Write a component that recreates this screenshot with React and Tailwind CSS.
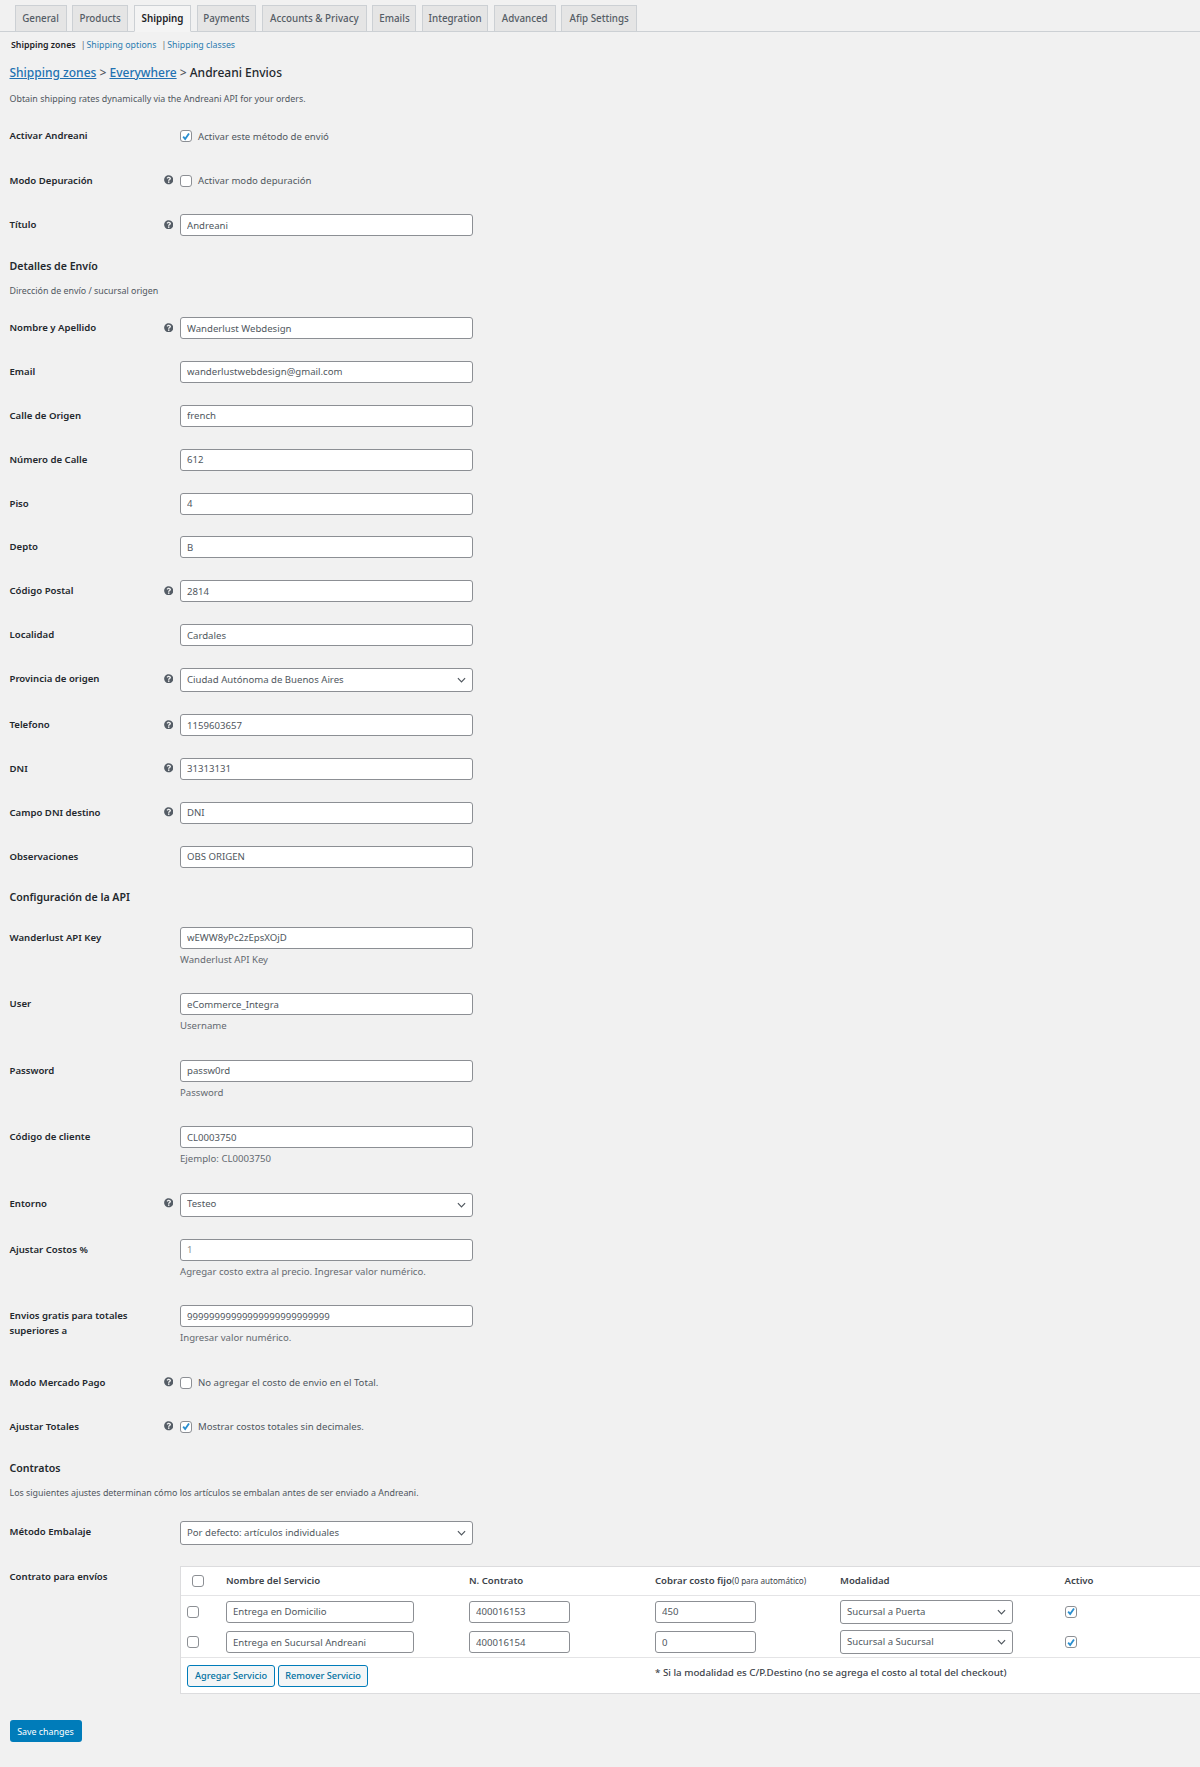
import React from "react";
import { FaQuestionCircle } from "react-icons/fa";

const tabs = ["General","Products","Shipping","Payments","Accounts & Privacy","Emails","Integration","Advanced","Afip Settings"];
const tabW = ["w-[52px]","w-[56.5px]","w-[57.5px]","w-[59.5px]","w-[105.5px]","w-[44px]","w-[66.5px]","w-[62px]","w-[76px]"];

const Help = () => <FaQuestionCircle className="absolute right-[7px] top-[5.5px] w-[9.5px] h-[9.5px] text-[#555d66]" />;

const Check = ({ on, className = "" }) => (
  <span className={"inline-flex shrink-0 items-center justify-center w-[12px] h-[12px] bg-white border border-[#8c8f94] rounded-[3px] " + className}>
    {on && (
      <svg viewBox="0 0 12 12" className="w-[11px] h-[11px]">
        <path d="M2.6 6.2 L5 9 L9.6 2.4" fill="none" stroke="#2a8fd0" strokeWidth="2.2" />
      </svg>
    )}
  </span>
);

const Chevron = () => (
  <svg viewBox="0 0 10 6" className="absolute right-[7px] top-1/2 -mt-[3px] w-[9px] h-[6px]">
    <path d="M1 1 L5 5 L9 1" fill="none" stroke="#50575e" strokeWidth="1.3" />
  </svg>
);

const Input = ({ value, w = "w-[292.5px]", muted }) => (
  <input
    readOnly
    value={value}
    className={w + " block h-[22px] bg-white border border-[#8c8f94] rounded-[3px] px-[6px] text-[9.6px] outline-none " + (muted ? "text-[#8a8f94]" : "text-[#50575e]")}
  />
);

const Select = ({ value, w = "w-[292.5px]", h = "h-[24px]" }) => (
  <div className={"relative " + w}>
    <select
      defaultValue={value}
      className={h + " w-full block appearance-none bg-white border border-[#8c8f94] rounded-[3px] px-[6px] text-[9.6px] text-[#50575e] outline-none"}
    >
      <option>{value}</option>
    </select>
    <Chevron />
  </div>
);

const Row = ({ label, help, children, desc }) => (
  <div className="relative flex items-start">
    <div className="relative w-[180px] shrink-0 pl-[9.5px] pr-[20px] pt-[3px] text-[9.6px] leading-[15px] font-semibold text-[#23282d]">
      {label}
      {help && <Help />}
    </div>
    <div>
      {children}
      {desc && <p className="mt-[3px] mb-[4.5px] text-[9.6px] leading-[15px] text-[#646970]">{desc}</p>}
    </div>
  </div>
);

const CheckRow = ({ label, help, on, text }) => (
  <Row label={label} help={help}>
    <div className="flex items-center h-[22px] gap-[6px] text-[9.6px] text-[#50575e]">
      <Check on={on} />
      <span className="pt-[1.5px]">{text}</span>
    </div>
  </Row>
);

const cols = "grid grid-cols-[45px_243px_186px_185px_224.5px_1fr]";

const TableRow = ({ name, num, cost, mod }) => (
  <div className={cols + " items-center h-[30.5px]"}>
    <Check className="ml-[6px]" />
    <Input value={name} w="w-[188px]" />
    <Input value={num} w="w-[101px]" />
    <Input value={cost} w="w-[101px]" />
    <Select value={mod} w="w-[173px]" />
    <Check on />
  </div>
);

export default function App() {
  return (
    <div className="w-[1200px] h-[1767px] overflow-hidden bg-[#f1f1f1] font-['Noto_Sans','Open_Sans',sans-serif] text-[#3c434a]">
      <div className="flex gap-[5.4px] h-[32px] pt-[5px] pl-[14.5px] border-b border-[#ccd0d4]">
        {tabs.map((t, i) => (
          <div
            key={t}
            className={tabW[i] + " flex items-center justify-center h-[27px] pt-[1px] border border-[#ccd0d4] text-[9.8px] font-medium " + (t === "Shipping" ? "bg-[#f4f4f4] border-b-[#f4f4f4] text-[#1d2327] font-semibold" : "bg-[#e5e5e5] text-[#555d66]")}
          >
            {t}
          </div>
        ))}
      </div>

      <div className="mt-[7px] pl-[11px] flex items-center h-[14px] text-[8.8px] text-[#2a7cb0]">
        <span className="font-semibold text-[#1d2327]">Shipping zones</span>
        <span className="ml-[5px] text-[#646970]">|</span><span className="ml-[1px]">Shipping options</span>
        <span className="ml-[5px] text-[#646970]">|</span><span className="ml-[1px]">Shipping classes</span>
      </div>

      <h2 className="mt-[11px] pl-[9.5px] h-[18px] leading-[18px] text-[12px] font-medium text-[#23282d]">
        <a className="underline text-[#2271b1]">Shipping zones</a> <span className="text-[#50575e]">&gt;</span>{" "}
        <a className="underline text-[#2271b1]">Everywhere</a> <span className="text-[#50575e]">&gt;</span> Andreani Envios
      </h2>

      <p className="mt-[10px] pl-[9.5px] h-[14px] leading-[14px] text-[8.9px] text-[#50575e]">Obtain shipping rates dynamically via the Andreani API for your orders.</p>

      <div className="mt-[19px] flex flex-col gap-[22.5px]">
        <CheckRow label="Activar Andreani" on text="Activar este método de envió" />
        <CheckRow label="Modo Depuración" help text="Activar modo depuración" />
        <Row label="Título" help><Input value="Andreani" /></Row>
      </div>

      <h3 className="mt-[21px] pl-[9.5px] h-[18px] leading-[18px] text-[10.6px] font-semibold text-[#23282d]">Detalles de Envío</h3>
      <p className="mt-[9px] pl-[9.5px] h-[14px] leading-[14px] text-[8.9px] text-[#50575e]">Dirección de envío / sucursal origen</p>

      <div className="mt-[19px] flex flex-col gap-[21.9px]">
        <Row label="Nombre y Apellido" help><Input value="Wanderlust Webdesign" /></Row>
        <Row label="Email"><Input value="wanderlustwebdesign@gmail.com" /></Row>
        <Row label="Calle de Origen"><Input value="french" /></Row>
        <Row label="Número de Calle"><Input value="612" /></Row>
        <Row label="Piso"><Input value="4" /></Row>
        <Row label="Depto"><Input value="B" /></Row>
        <Row label="Código Postal" help><Input value="2814" /></Row>
        <Row label="Localidad"><Input value="Cardales" /></Row>
        <Row label="Provincia de origen" help><Select value="Ciudad Autónoma de Buenos Aires" /></Row>
        <Row label="Telefono" help><Input value="1159603657" /></Row>
        <Row label="DNI" help><Input value="31313131" /></Row>
        <Row label="Campo DNI destino" help><Input value="DNI" /></Row>
        <Row label="Observaciones"><Input value="OBS ORIGEN" /></Row>
      </div>

      <h3 className="mt-[20.5px] pl-[9.5px] h-[18px] leading-[18px] text-[10.6px] font-semibold text-[#23282d]">Configuración de la API</h3>

      <div className="mt-[20.5px] flex flex-col gap-[22px]">
        <Row label="Wanderlust API Key" desc="Wanderlust API Key"><Input value="wEWW8yPc2zEpsXOjD" /></Row>
        <Row label="User" desc="Username"><Input value="eCommerce_Integra" /></Row>
        <Row label="Password" desc="Password"><Input value="passw0rd" /></Row>
        <Row label="Código de cliente" desc="Ejemplo: CL0003750"><Input value="CL0003750" /></Row>
        <Row label="Entorno" help><Select value="Testeo" /></Row>
        <Row label="Ajustar Costos %" desc="Agregar costo extra al precio. Ingresar valor numérico."><Input value="1" muted /></Row>
        <Row label="Envios gratis para totales superiores a" desc="Ingresar valor numérico."><Input value="99999999999999999999999999" /></Row>
        <CheckRow label="Modo Mercado Pago" help text="No agregar el costo de envio en el Total." />
        <CheckRow label="Ajustar Totales" help on text="Mostrar costos totales sin decimales." />
      </div>

      <h3 className="mt-[21px] pl-[9.5px] h-[18px] leading-[18px] text-[10.6px] font-semibold text-[#23282d]">Contratos</h3>
      <p className="mt-[9.5px] pl-[9.5px] h-[14px] leading-[14px] text-[8.9px] text-[#50575e]">Los siguientes ajustes determinan cómo los artículos se embalan antes de ser enviado a Andreani.</p>

      <div className="mt-[21px] flex flex-col gap-[21px]">
        <Row label="Método Embalaje"><Select value="Por defecto: artículos individuales" /></Row>
        <Row label="Contrato para envíos">
          <div className="w-[1020px] h-[128px] bg-white border-y border-l border-[#dcdcde]">
            <div className={cols + " items-center h-[28.5px] pt-[1px] border-b border-[#e4e4e6] text-[9.6px] font-semibold text-[#3c434a]"}>
              <Check className="ml-[11px]" />
              <span>Nombre del Servicio</span>
              <span>N. Contrato</span>
              <span className="whitespace-nowrap">Cobrar costo fijo<span className="text-[8.1px] font-normal">(0 para automático)</span></span>
              <span>Modalidad</span>
              <span>Activo</span>
            </div>
            <div className="pt-[1px] h-[62.5px] border-b border-[#e4e4e6]">
              <TableRow name="Entrega en Domicilio" num="400016153" cost="450" mod="Sucursal a Puerta" />
              <TableRow name="Entrega en Sucursal Andreani" num="400016154" cost="0" mod="Sucursal a Sucursal" />
            </div>
            <div className="flex items-start">
              <div className="flex gap-[3px] ml-[6px] mt-[7px] w-[468px]">
                <button className="w-[88px] h-[22px] bg-[#f3f5f6] border border-[#007cba] rounded-[3px] text-[9.2px] font-medium text-[#0071a1]">Agregar Servicio</button>
                <button className="w-[90px] h-[22px] bg-[#f3f5f6] border border-[#007cba] rounded-[3px] text-[9.2px] font-medium text-[#0071a1]">Remover Servicio</button>
              </div>
              <span className="mt-[6.5px] text-[9.75px] font-medium leading-[15px] text-[#3c434a]">* Si la modalidad es C/P.Destino (no se agrega el costo al total del checkout)</span>
            </div>
          </div>
        </Row>
      </div>

      <button className="block mt-[26px] ml-[9.5px] w-[72px] h-[22px] bg-[#007cba] rounded-[3px] text-[8.9px] text-white">Save changes</button>
    </div>
  );
}
